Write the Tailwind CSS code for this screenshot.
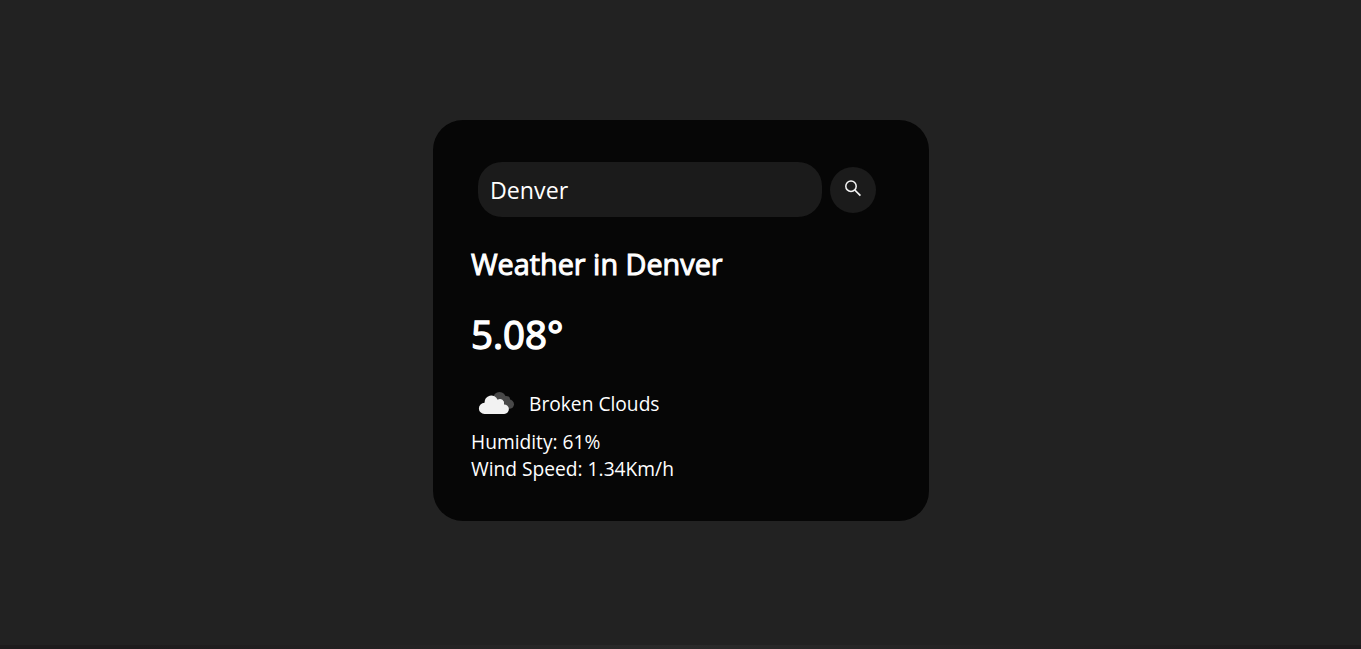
<!DOCTYPE html>
<html lang="en">
<head>
<meta charset="utf-8">
<title>Weather</title>
<script src="https://cdn.jsdelivr.net/npm/@tailwindcss/browser@4"></script>
</head>
<body class="flex h-screen flex-col overflow-hidden bg-[#222222] font-['Open_Sans','Noto_Sans',sans-serif] text-[19.2px] text-white">
<main class="flex flex-1 flex-col items-center pt-[120px]">
<section class="h-[401px] w-[496px] rounded-[30px] bg-[#060606] pr-[37.5px] pl-[38.5px] pt-[42px]">
<div class="flex items-center pl-[7px]">
<input type="text" value="Denver" aria-label="City" class="h-[55px] w-[344px] rounded-[24px] bg-[#1b1b1b] px-3 pt-px text-[23.2px] leading-[32px] text-white outline-none">
<button aria-label="Search" class="ml-2 flex size-[46px] items-center justify-center rounded-full bg-[#1b1b1b]">
<svg class="-mt-1 size-[24px]" viewBox="0 0 24 24" fill="none" stroke="#f4f4f4" stroke-width="1.5"><circle cx="10" cy="10.2" r="5.2"/><path d="M13.8 14 19.4 19.6" stroke-width="1.7"/></svg>
</button>
</div>
<h2 class="mt-[27px] text-[28.8px] leading-[39px] font-normal [-webkit-text-stroke:1px_white]">Weather in Denver</h2>
<h1 class="mt-[25px] text-[38.4px] leading-[52px] font-normal [-webkit-text-stroke:1.4px_white]">5.08°</h1>
<div class="mt-[18px] flex h-[50px] items-center">
<svg class="size-[50px]" viewBox="0 0 50 50"><g fill="#484848"><circle cx="28.5" cy="20.3" r="6.3"/><circle cx="35.2" cy="22" r="4"/><circle cx="38.4" cy="26.2" r="4.6"/><path d="M28 20h8l3 10.5h-6z"/></g><path fill="#f2f2f2" d="M13.5 36a5.6 5.6 0 0 1 0-11.2 6.8 6.8 0 0 1 13.1-3 4.2 4.2 0 0 1 6.4 4.6 4.8 4.8 0 0 1 .2 9.6z"/></svg>
<span class="ml-2 pt-0.5 leading-[26px]">Broken Clouds</span>
</div>
<p class="leading-[27px]">Humidity: 61%</p>
<p class="leading-[27px]">Wind Speed: 1.34Km/h</p>
</section>
</main>
<footer class="h-1 bg-linear-to-r from-[#1e1c1d] from-10% via-[#2a2a2a] to-[#1e1c1d] to-95%"></footer>
</body>
</html>
